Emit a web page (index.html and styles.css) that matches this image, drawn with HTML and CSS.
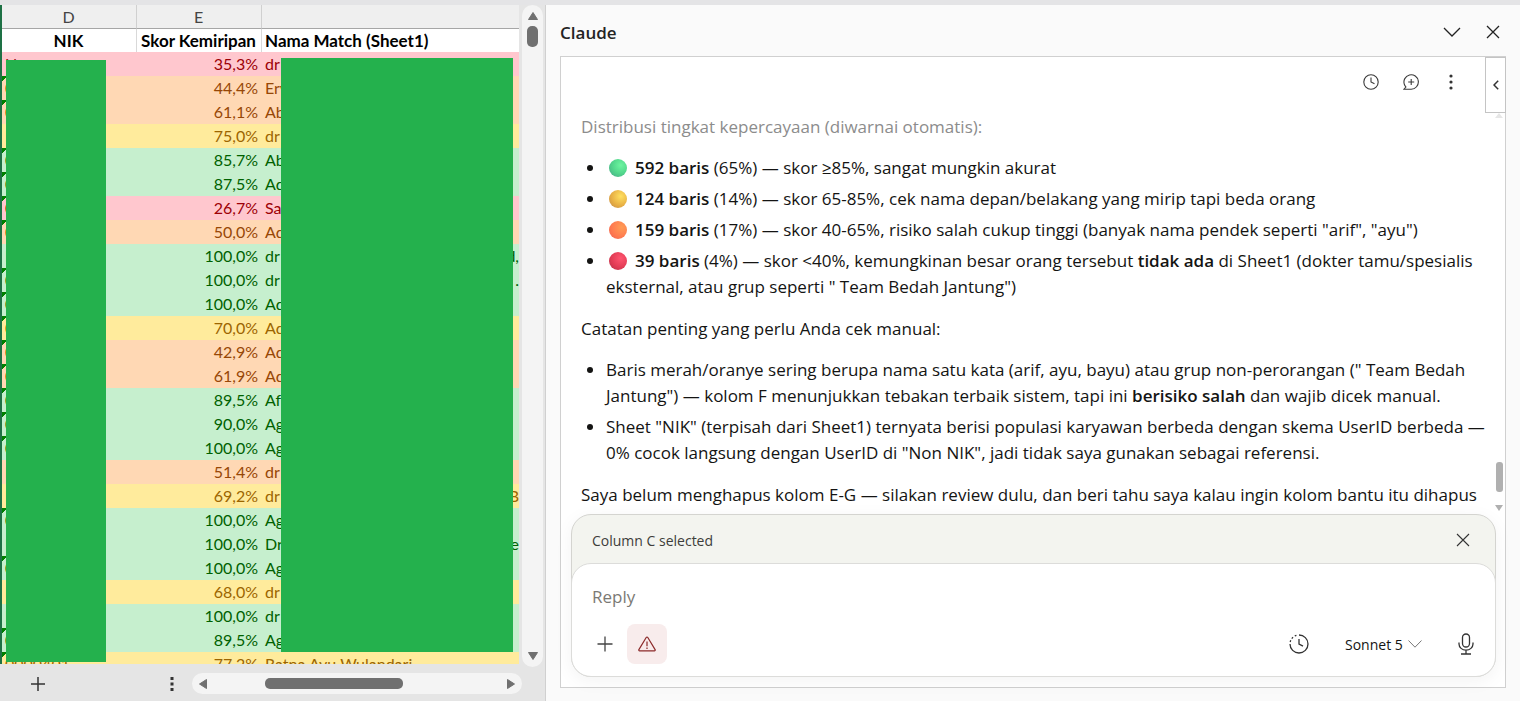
FILE: index.html
```html
<!DOCTYPE html>
<html lang="id">
<head>
    <meta charset="UTF-8">
    <meta name="viewport" content="width=device-width, initial-scale=1.0">
    <title>Claude</title>
    <link rel="stylesheet" href="styles.css">
</head>
<body>
    <!-- spreadsheet -->
    <section class="sheet">
        <div class="sheet-main">
            <div class="grid">
                <table class="cells">
                    <colgroup><col class="col-d"><col class="col-e"><col></colgroup>
                    <thead>
                        <tr class="letters"><th>D</th><th>E</th><th></th></tr>
                        <tr class="titles"><th>NIK</th><th>Skor Kemiripan</th><th class="left">Nama Match (Sheet1)</th></tr>
                    </thead>
                    <tbody>
                        <tr class="red"><td>N</td><td>35,3%</td><td>dr</td></tr>
                        <tr class="orange flag"><td>0</td><td>44,4%</td><td>Erv</td></tr>
                        <tr class="orange flag"><td>0</td><td>61,1%</td><td>Ab</td></tr>
                        <tr class="yellow"><td>N</td><td>75,0%</td><td>dr</td></tr>
                        <tr class="green flag"><td>0</td><td>85,7%</td><td>Ab</td></tr>
                        <tr class="green flag"><td>0</td><td>87,5%</td><td>Ad</td></tr>
                        <tr class="red flag"><td>0</td><td>26,7%</td><td>Sa</td></tr>
                        <tr class="orange flag"><td>0</td><td>50,0%</td><td>Ad</td></tr>
                        <tr class="green"><td>N</td><td>100,0%</td><td>dr<span class="tail">d,</span></td></tr>
                        <tr class="green flag"><td>0</td><td>100,0%</td><td>dr<span class="tail">.</span></td></tr>
                        <tr class="green flag"><td>0</td><td>100,0%</td><td>Ad</td></tr>
                        <tr class="yellow flag"><td>0</td><td>70,0%</td><td>Ad</td></tr>
                        <tr class="orange flag"><td>0</td><td>42,9%</td><td>Ad</td></tr>
                        <tr class="orange flag"><td>0</td><td>61,9%</td><td>Ad</td></tr>
                        <tr class="green flag"><td>0</td><td>89,5%</td><td>Af</td></tr>
                        <tr class="green flag"><td>0</td><td>90,0%</td><td>Ag</td></tr>
                        <tr class="green flag"><td>0</td><td>100,0%</td><td>Ag</td></tr>
                        <tr class="orange"><td>N</td><td>51,4%</td><td>dr</td></tr>
                        <tr class="yellow"><td>N</td><td>69,2%</td><td>dr<span class="tail">B</span></td></tr>
                        <tr class="green flag"><td>0</td><td>100,0%</td><td>Ag</td></tr>
                        <tr class="green"><td>N</td><td>100,0%</td><td>Dr<span class="tail">e</span></td></tr>
                        <tr class="green flag"><td>0</td><td>100,0%</td><td>Ag</td></tr>
                        <tr class="yellow"><td>N</td><td>68,0%</td><td>dr</td></tr>
                        <tr class="green"><td>N</td><td>100,0%</td><td>dr</td></tr>
                        <tr class="green flag"><td>0</td><td>89,5%</td><td>Ag</td></tr>
                        <tr class="yellow flag"><td>0000401</td><td>77,2%</td><td>Ratna Ayu Wulandari</td></tr>
                    </tbody>
                </table>
                <div class="cover cover-nik"></div>
                <div class="cover cover-nama"></div>
            </div>
            <div class="vbar">
                <svg width="12" height="10" viewBox="0 0 12 10"><path d="M6 1.500 10.500 8.500H1.500Z" fill="#707070" stroke="#707070" stroke-linejoin="round"/></svg>
                <div class="vthumb"></div>
                <svg class="last" width="12" height="10" viewBox="0 0 12 10"><path d="M6 8.500 1.500 1.500h9Z" fill="#707070" stroke="#707070" stroke-linejoin="round"/></svg>
            </div>
        </div>
        <div class="sheet-foot">
            <button class="plain add" aria-label="Sheet baru"><svg width="16" height="16" viewBox="0 0 16 16"><path d="M8 1v14M1 8h14" stroke="#333" stroke-width="1.500"/></svg></button>
            <button class="plain" aria-label="Opsi"><svg width="4" height="14" viewBox="0 0 4 14" fill="#333"><path d="M.5 0h3v3h-3zM.5 5.500h3v3h-3zM.5 11h3v3h-3z"/></svg></button>
            <div class="hbar">
                <svg width="10" height="12" viewBox="0 0 10 12"><path d="M1.500 6 8.500 1.500v9Z" fill="#707070" stroke="#707070" stroke-linejoin="round"/></svg>
                <div class="hthumb"></div>
                <svg class="last" width="10" height="12" viewBox="0 0 10 12"><path d="M8.500 6 1.500 1.500v9Z" fill="#707070" stroke="#707070" stroke-linejoin="round"/></svg>
            </div>
        </div>
    </section>

    <!-- task pane -->
    <aside class="pane">
        <header class="pane-head">
            <h1>Claude</h1>
            <button class="plain" aria-label="Ciutkan"><svg width="18" height="10" viewBox="0 0 18 10" fill="none" stroke="#222" stroke-width="1.300"><path d="M1 1l8 8L17 1"/></svg></button>
            <button class="plain" aria-label="Tutup"><svg width="14" height="14" viewBox="0 0 14 14" fill="none" stroke="#222" stroke-width="1.300"><path d="M1 1l12 12M13 1L1 13"/></svg></button>
        </header>
        <div class="frame">
            <div class="tools">
                <button class="plain" aria-label="Riwayat"><svg width="16" height="16" viewBox="0 0 16 16" fill="none" stroke="#3a3a3a" stroke-width="1.100"><circle cx="8" cy="8" r="7.200"/><path d="M8 3.500V8l3.500 1.800"/></svg></button>
                <button class="plain" aria-label="Obrolan baru"><svg width="16" height="16" viewBox="0 0 16 16" fill="none" stroke="#3a3a3a" stroke-width="1.100"><path d="M1 15.200h7.200A7.200 7.200 0 1 0 1.400 10.500c.3 1 .9 1.700 1.500 2.500L1 15.200ZM8.200 5v6M5.200 8h6"/></svg></button>
                <button class="plain" aria-label="Menu"><svg width="16" height="16" viewBox="0 0 16 16" fill="#333"><circle cx="8" cy="2" r="1.600"/><circle cx="8" cy="8" r="1.600"/><circle cx="8" cy="14" r="1.600"/></svg></button>
            </div>
            <button class="tab" aria-label="Perluas"><svg width="6" height="10" viewBox="0 0 6 10" fill="none" stroke="#333" stroke-width="1.500"><path d="M5.200.8 1 5l4.200 4.200"/></svg></button>
            <main class="chat">
                <p class="faded">Distribusi tingkat kepercayaan (diwarnai otomatis):</p>
                <ul>
                    <li><i class="dot dot-green"></i><b>592 baris</b> (65%) — skor ≥85%, sangat mungkin akurat</li>
                    <li><i class="dot dot-yellow"></i><b>124 baris</b> (14%) — skor 65-85%, cek nama depan/belakang yang mirip tapi beda orang</li>
                    <li><i class="dot dot-orange"></i><b>159 baris</b> (17%) — skor 40-65%, risiko salah cukup tinggi (banyak nama pendek seperti "arif", "ayu")</li>
                    <li><i class="dot dot-red"></i><b>39 baris</b> (4%) — skor &lt;40%, kemungkinan besar orang tersebut <b>tidak ada</b> di Sheet1 (dokter tamu/spesialis eksternal, atau grup seperti " Team Bedah Jantung")</li>
                </ul>
                <p>Catatan penting yang perlu Anda cek manual:</p>
                <ul>
                    <li>Baris merah/oranye sering berupa nama satu kata (arif, ayu, bayu) atau grup non-perorangan (" Team Bedah Jantung") — kolom F menunjukkan tebakan terbaik sistem, tapi ini <b>berisiko salah</b> dan wajib dicek manual.</li>
                    <li>Sheet "NIK" (terpisah dari Sheet1) ternyata berisi populasi karyawan berbeda dengan skema UserID berbeda — 0% cocok langsung dengan UserID di "Non NIK", jadi tidak saya gunakan sebagai referensi.</li>
                </ul>
                <p>Saya belum menghapus kolom E-G — silakan review dulu, dan beri tahu saya kalau ingin kolom bantu itu dihapus</p>
            </main>
            <div class="scroll">
                <svg width="8" height="5" viewBox="0 0 8 5"><path d="M4 0l4 5H0Z" fill="#e6e6e6"/></svg>
                <div class="scroll-thumb"></div>
                <svg width="8" height="6" viewBox="0 0 8 6"><path d="M0 0h8L4 6Z" fill="#b0b0b0"/></svg>
            </div>
            <form class="composer">
                <div class="context">
                    <span>Column C selected</span>
                    <button type="button" class="plain" aria-label="Hapus"><svg width="14" height="14" viewBox="0 0 14 14" fill="none" stroke="#333" stroke-width="1.100"><path d="M1 1l12 12M13 1L1 13"/></svg></button>
                </div>
                <div class="box">
                    <input type="text" class="reply" placeholder="Reply" aria-label="Reply">
                    <div class="actions">
                        <button type="button" class="plain plus" aria-label="Tambah"><svg width="16" height="16" viewBox="0 0 16 16"><path d="M8 .5v15M.5 8h15" stroke="#444" stroke-width="1.300"/></svg></button>
                        <button type="button" class="plain warn" aria-label="Peringatan"><svg width="18" height="16" viewBox="0 0 18 16" fill="none" stroke="#8c2a2a" stroke-width="1.200" stroke-linejoin="round"><path d="M8.200 1.500.9 13.600c-.3.600 0 1.200.7 1.200h14.800c.7 0 1-.6.700-1.200L9.800 1.500c-.4-.6-1.200-.6-1.600 0ZM9 5.500v4.800M9 11.600v1.400"/></svg></button>
                        <button type="button" class="plain clock" aria-label="Effort"><svg width="20" height="20" viewBox="0 0 20 20" fill="none" stroke="#333" stroke-width="1.300"><path d="M10 1a9 9 0 1 1-9 9"/><path d="M1.200 8a9 9 0 0 1 6.800-6.800" stroke-dasharray="1.800 2"/><path d="M10 5v5.200l4 2"/></svg></button>
                        <label class="model">
                            <select aria-label="Model"><option>Sonnet 5</option></select>
                            <svg width="14" height="8" viewBox="0 0 14 8" fill="none" stroke="#777"><path d="M.5.5 7 7.200 13.500.5"/></svg>
                        </label>
                        <button type="button" class="plain" aria-label="Mikrofon"><svg width="16" height="22" viewBox="0 0 16 22" fill="none" stroke="#333" stroke-width="1.300"><rect x="4.500" y="1" width="7" height="13" rx="3.500"/><path d="M1 9.500v1.500a7 6.200 0 0 0 14 0V9.500M8 17.200V21M3 21h10"/></svg></button>
                    </div>
                </div>
            </form>
        </div>
    </aside>
</body>
</html>
```
FILE: styles.css
```css
*{
    box-sizing:border-box;
}
body{
    margin:0;
    padding-top:5px;
    height:100vh;
    display:flex;
    overflow:hidden;
    background-color:#e4e4e6;
    font-family:"Open Sans",sans-serif;
    color:#141413;
}
svg{
    display:block;
    flex:none;
}
.plain{
    border:none;
    background:none;
    padding:0;
    display:flex;
    align-items:center;
    justify-content:center;
}

/* spreadsheet */
.sheet{
    flex:0 0 545px;
    display:flex;
    flex-direction:column;
    background-color:#e5e5e5;
    font-family:Lato,sans-serif;
    font-size:16px;
}
.sheet-main{
    flex:1;
    min-height:0;
    display:flex;
    gap:3px;
}
.grid{
    flex:1;
    position:relative;
    overflow:hidden;
    border-left:2px solid #1e7145;
}
.cells{
    width:100%;
    table-layout:fixed;
    border-collapse:separate;
    border-spacing:0;
}
.col-d{
    width:135px;
}
.col-e{
    width:125px;
}
.cells th, .cells td{
    height:24px;
    padding:0 4px 0 3px;
    line-height:24px;
    white-space:nowrap;
    overflow:hidden;
}
.cells .letters th{
    height:24px;
    line-height:23px;
    background-color:#efefef;
    border-right:1px solid #d0d0d0;
    border-bottom:1px solid #a6a6a6;
    font-weight:normal;
    color:#444;
}
.cells .titles th{
    height:23px;
    line-height:23px;
    background-color:#fff;
    border-right:1px solid #d9d9d9;
    font-size:17px;
    color:#000;
}
.cells tr th:last-child{
    border-right:none;
}
.cells .left{
    text-align:left;
}
.cells td:nth-child(2){
    text-align:right;
}
.tail{
    float:right;
    margin-right:-4px;
}
.red{
    background-color:#ffc7ce;
    color:#9c0006;
}
.orange{
    background-color:#ffd8b4;
    color:#974706;
}
.yellow{
    background-color:#ffeb9c;
    color:#9c6500;
}
.green{
    background-color:#c6efce;
    color:#006100;
}
/* green corner of a number stored as text */
.flag td:first-child{
    background:linear-gradient(135deg,#008000 4px,transparent 4px) no-repeat;
}
.cover{
    position:absolute;
    background-color:#24b14d;
}
.cover-nik{
    top:55px;
    bottom:2px;
    left:4px;
    width:100px;
}
.cover-nama{
    top:53px;
    bottom:12px;
    left:279px;
    right:6px;
}
.vbar{
    width:21px;
    margin-right:2px;
    margin-bottom:-3px;
    padding:6px 0;
    display:flex;
    flex-direction:column;
    align-items:center;
    gap:5px;
    border-radius:11px;
    background-color:#f4f4f4;
}
.vthumb{
    width:11px;
    height:21px;
    border-radius:5px;
    background-color:#707070;
}
.vbar .last{
    margin-top:auto;
}
.sheet-foot{
    height:37px;
    padding:2px 23px 0 30px;
    display:flex;
    align-items:center;
}
.add{
    margin-right:auto;
}
.hbar{
    width:330px;
    height:21px;
    margin-left:18px;
    padding:0 6px;
    display:flex;
    align-items:center;
    border-radius:11px;
    background-color:#f4f4f4;
}
.hthumb{
    width:138px;
    height:11px;
    margin-left:57px;
    border-radius:5px;
    background-color:#707070;
}
.hbar .last{
    margin-left:auto;
}

/* task pane */
.pane{
    flex:1;
    min-width:0;
    padding:0 14px 13px;
    display:flex;
    flex-direction:column;
    border-left:1px solid #d0d0d0;
    background-color:#fafafa;
}
.pane-head{
    height:51px;
    padding:3px 6px 0 0;
    display:flex;
    align-items:center;
    gap:25px;
}
.pane-head h1{
    margin:0 auto 0 0;
    font-size:17px;
    font-weight:600;
    color:#242424;
}
.frame{
    flex:1;
    min-height:0;
    position:relative;
    display:flex;
    flex-direction:column;
    border:1px solid #d0d0d0;
    background-color:#fff;
}
.tools{
    padding:17px 46px 0 0;
    display:flex;
    justify-content:flex-end;
    gap:24px;
}
.tab{
    position:absolute;
    top:0;
    right:-1px;
    width:21px;
    height:56px;
    padding:0;
    display:flex;
    align-items:center;
    justify-content:center;
    border:1px solid #c4c4c4;
    background-color:#fff;
}
.chat{
    flex:1;
    min-height:0;
    overflow:hidden;
    padding:24px 16px 0 20px;
    font-size:17px;
    line-height:26px;
}
.chat p{
    margin:0 0 15px;
}
.chat ul{
    margin:0 0 16px;
    padding-left:25px;
}
.chat li + li{
    margin-top:5px;
}
.chat b{
    font-weight:600;
}
.faded{
    color:#8c8c8c;
}
.dot{
    display:inline-block;
    width:18px;
    height:18px;
    margin:0 8px 0 3px;
    border-radius:50%;
    vertical-align:-3px;
}
.dot-green{
    background:radial-gradient(circle at 65% 35%,#6df5a0,#52d68c 50%,#45a386);
}
.dot-yellow{
    background:radial-gradient(circle at 65% 35%,#ffe060,#e8b044 55%,#c08848);
}
.dot-orange{
    background:radial-gradient(circle at 70% 35%,#ff9c55,#ff7c50 55%,#ee6050);
}
.dot-red{
    background:radial-gradient(circle at 65% 35%,#ff5570,#e23c55 55%,#b03048);
}
.scroll{
    position:absolute;
    top:56px;
    right:2px;
    height:398px;
    display:flex;
    flex-direction:column;
    align-items:center;
}
.scroll-thumb{
    width:7px;
    height:30px;
    margin:auto 0 13px;
    border-radius:3px;
    background-color:#b0b0b0;
}
.composer{
    margin:0 9px 10px 10px;
    border:1px solid #d4d4d0;
    border-radius:20px;
    background-color:#f3f4ef;
    box-shadow:0 4px 18px rgba(0,0,0,.05);
}
.context{
    height:48px;
    padding:2px 25px 0 20px;
    display:flex;
    align-items:center;
    justify-content:space-between;
    font-size:14px;
    color:#3d3d3a;
}
.box{
    margin:0 -1px -1px;
    padding:19px 21px 12px 20px;
    border:1px solid #dcdcda;
    border-radius:20px;
    background-color:#fff;
}
.reply{
    display:block;
    width:100%;
    height:26px;
    padding:0;
    border:none;
    outline:none;
    font-family:inherit;
    font-size:17px;
}
.reply::placeholder{
    color:#7b7974;
}
.actions{
    margin-top:15px;
    display:flex;
    align-items:center;
}
.plus{
    margin-left:5px;
}
.warn{
    width:40px;
    height:40px;
    margin:0 auto 0 14px;
    border-radius:8px;
    background-color:#f8ecec;
}
.model{
    margin:0 36px;
    display:flex;
    align-items:center;
    gap:5px;
}
.model select{
    appearance:none;
    padding:0;
    border:none;
    background:none;
    font-family:inherit;
    font-size:14px;
    color:#141413;
}
```
